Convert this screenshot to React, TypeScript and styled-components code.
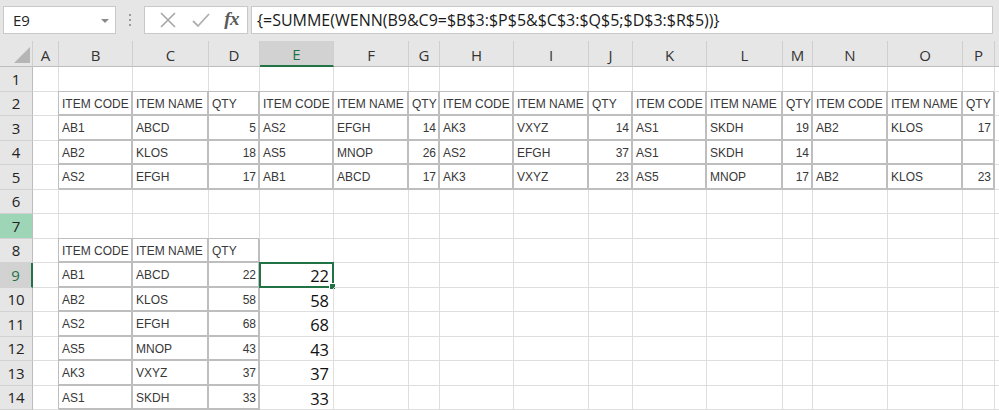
import React from "react";
import styled, { createGlobalStyle, css } from "styled-components";

const Global = createGlobalStyle`
  html, body { margin: 0; padding: 0; background: #ffffff; }
  body { width: 999px; height: 410px; overflow: hidden; }
`;

const Page = styled.div`
  width: 999px;
  height: 410px;
  display: flex;
  flex-direction: column;
  background: #e6e6e6;
  overflow: hidden;
`;

const FormulaBar = styled.div`
  height: 41px;
  box-sizing: border-box;
  display: flex;
  align-items: flex-start;
  padding: 6px 3px 0 3px;
  gap: 0;
`;

const Box = styled.div`
  height: 28px;
  box-sizing: border-box;
  background: #ffffff;
  border: 1px solid #c9c9c9;
  display: flex;
  align-items: center;
`;

const NameBox = styled(Box)`
  width: 113px;
  padding: 0 6px 0 9px;
  justify-content: space-between;
  font-family: "Open Sans", sans-serif;
  font-size: 15px;
  color: #222;
`;

const Arrow = styled.span`
  width: 0;
  height: 0;
  border-left: 4px solid transparent;
  border-right: 4px solid transparent;
  border-top: 4px solid #8a8a8a;
  margin-top: 1px;
`;

const Dots = styled.div`
  width: 28px;
  height: 28px;
  display: flex;
  flex-direction: column;
  align-items: center;
  justify-content: center;
  gap: 3px;
  & > span {
    width: 2px;
    height: 2px;
    background: #9a9a9a;
  }
`;

const FxBox = styled(Box)`
  width: 104px;
  padding: 0 8px 0 14px;
  justify-content: space-between;
`;

const Fx = styled.span`
  font-family: "Liberation Serif", serif;
  font-style: italic;
  font-weight: bold;
  font-size: 19px;
  color: #5a5a5a;
  letter-spacing: -0.5px;
  margin-top: -2px;
`;

const FormulaInput = styled(Box)`
  flex: 1;
  margin-left: 3px;
  margin-right: 3px;
  padding-left: 5px;
  font-family: "Open Sans", sans-serif;
  font-size: 16px;
  color: #1a1a1a;
  white-space: nowrap;
  overflow: hidden;
`;

const COLS = [33, 26, 74, 76, 51, 74, 75, 31, 74, 75, 44, 74, 76, 30, 75, 75, 32];
const LETTERS = ["A", "B", "C", "D", "E", "F", "G", "H", "I", "J", "K", "L", "M", "N", "O", "P", ""];

const Sheet = styled.div`
  flex: 1;
  display: grid;
  grid-template-columns: ${COLS.map((c) => `${c}px`).join(" ")} 1fr;
  grid-template-rows: 26px repeat(14, 24.5px);
  background: #ffffff;
`;

const Corner = styled.div`
  background: #e6e6e6;
  border-right: 1px solid #cfcfcf;
  border-bottom: 1px solid #bdbdbd;
  display: flex;
  align-items: flex-end;
  justify-content: flex-end;
  padding: 0 2px 3px 0;
  box-sizing: border-box;
`;

const Triangle = styled.div`
  width: 0;
  height: 0;
  border-left: 16px solid transparent;
  border-bottom: 16px solid #b5b5b5;
`;

const ColHead = styled.div<{ $active?: boolean }>`
  box-sizing: border-box;
  background: #e6e6e6;
  border-right: 1px solid #cfcfcf;
  border-bottom: 1px solid #bdbdbd;
  display: flex;
  align-items: center;
  justify-content: center;
  font-family: "Open Sans", sans-serif;
  font-size: 15px;
  color: #333;
  padding-top: 2px;
  ${(p) =>
    p.$active &&
    css`
      background: #d2d2d2;
      color: #217346;
      border-bottom: 2px solid #217346;
    `}
`;

const RowHead = styled.div<{ $state?: "sel" | "hover" }>`
  box-sizing: border-box;
  background: #e6e6e6;
  border-right: 1px solid #bdbdbd;
  border-bottom: 1px solid #d2d2d2;
  display: flex;
  align-items: center;
  justify-content: center;
  font-family: "Open Sans", sans-serif;
  font-size: 15px;
  color: #222;
  ${(p) =>
    p.$state === "sel" &&
    css`
      background: #d2d2d2;
      color: #217346;
      border-right: 2px solid #217346;
    `}
  ${(p) =>
    p.$state === "hover" &&
    css`
      background: #9fd5b7;
      color: #222;
    `}
`;

const Cell = styled.div<{ $right?: boolean; $boxed?: boolean; $big?: boolean }>`
  position: relative;
  box-sizing: border-box;
  border-right: 1px solid #dedede;
  border-bottom: 1px solid #dedede;
  display: flex;
  align-items: center;
  justify-content: ${(p) => (p.$right ? "flex-end" : "flex-start")};
  padding: 2px 3px 0 3px;
  font-family: "Liberation Sans", Arial, sans-serif;
  font-size: 12px;
  color: #383838;
  white-space: nowrap;
  overflow: visible;
  ${(p) =>
    p.$boxed &&
    css`
      border-right: 2px solid #bebebe;
      border-bottom: 2px solid #bebebe;
      box-shadow: -1px -1px 0 #bebebe;
      padding: 2px 2px 0 3px;
    `}
  ${(p) =>
    p.$big &&
    css`
      font-family: "Open Sans", sans-serif;
      font-size: 16.5px;
      color: #111;
      padding: 2px 4px 0 3px;
    `}
`;

const Selection = styled.div`
  position: absolute;
  left: -1px;
  top: -1px;
  right: -1px;
  bottom: -1px;
  border: 2px solid #217346;
  pointer-events: none;
`;

const Handle = styled.div`
  position: absolute;
  right: -4px;
  bottom: -4px;
  width: 5px;
  height: 5px;
  background: #217346;
  border: 1px solid #ffffff;
`;

type CellData = { v?: string; right?: boolean };

const H3 = ["ITEM CODE", "ITEM NAME", "QTY"];

const top: string[][] = [
  ["AB1", "ABCD", "5", "AS2", "EFGH", "14", "AK3", "VXYZ", "14", "AS1", "SKDH", "19", "AB2", "KLOS", "17"],
  ["AB2", "KLOS", "18", "AS5", "MNOP", "26", "AS2", "EFGH", "37", "AS1", "SKDH", "14", "", "", ""],
  ["AS2", "EFGH", "17", "AB1", "ABCD", "17", "AK3", "VXYZ", "23", "AS5", "MNOP", "17", "AB2", "KLOS", "23"],
];

const bottom: string[][] = [
  ["AB1", "ABCD", "22"],
  ["AB2", "KLOS", "58"],
  ["AS2", "EFGH", "68"],
  ["AS5", "MNOP", "43"],
  ["AK3", "VXYZ", "37"],
  ["AS1", "SKDH", "33"],
];

const eValues = ["22", "58", "68", "43", "37", "33"];

// column index: 0 = A, 1 = B ...
function cellInfo(row: number, col: number): { data: CellData; boxed: boolean; big: boolean; selected: boolean } {
  let data: CellData = {};
  let boxed = false;
  let big = false;
  let selected = false;
  if (row >= 2 && row <= 5 && col >= 1 && col <= 15) {
    boxed = true;
    const k = (col - 1) % 3;
    if (row === 2) data = { v: H3[k] };
    else data = { v: top[row - 3][col - 1], right: k === 2 };
  }
  if (row >= 8 && row <= 14 && col >= 1 && col <= 3) {
    boxed = true;
    const k = col - 1;
    if (row === 8) data = { v: H3[k] };
    else data = { v: bottom[row - 9][k], right: k === 2 };
  }
  if (row >= 9 && row <= 14 && col === 4) {
    big = true;
    data = { v: eValues[row - 9], right: true };
    if (row === 9) selected = true;
  }
  return { data, boxed, big, selected };
}

const XIcon = () => (
  <svg width="18" height="18" viewBox="0 0 18 18">
    <path d="M2 2 L16 16 M16 2 L2 16" stroke="#a6a6a6" strokeWidth="1.6" fill="none" />
  </svg>
);

const CheckIcon = () => (
  <svg width="20" height="18" viewBox="0 0 20 18">
    <path d="M2 10 L7 15 L18 3" stroke="#b0b0b0" strokeWidth="1.8" fill="none" />
  </svg>
);

export default function App() {
  const rows = Array.from({ length: 14 }, (_, i) => i + 1);
  const cols = Array.from({ length: 17 }, (_, i) => i);
  return (
    <>
      <Global />
      <Page>
        <FormulaBar>
          <NameBox>
            <span>E9</span>
            <Arrow />
          </NameBox>
          <Dots>
            <span />
            <span />
            <span />
          </Dots>
          <FxBox>
            <XIcon />
            <CheckIcon />
            <Fx>fx</Fx>
          </FxBox>
          <FormulaInput>{"{=SUMME(WENN(B9&C9=$B$3:$P$5&$C$3:$Q$5;$D$3:$R$5))}"}</FormulaInput>
        </FormulaBar>
        <Sheet>
          <Corner>
            <Triangle />
          </Corner>
          {LETTERS.map((l, i) => (
            <ColHead key={i} $active={l === "E"}>
              {l}
            </ColHead>
          ))}
          {rows.map((r) => (
            <React.Fragment key={r}>
              <RowHead $state={r === 9 ? "sel" : r === 7 ? "hover" : undefined}>{r}</RowHead>
              {cols.map((c) => {
                const info = cellInfo(r, c);
                return (
                  <Cell key={c} $right={info.data.right} $boxed={info.boxed} $big={info.big}>
                    {info.data.v}
                    {info.selected && (
                      <Selection>
                        <Handle />
                      </Selection>
                    )}
                  </Cell>
                );
              })}
            </React.Fragment>
          ))}
        </Sheet>
      </Page>
    </>
  );
}
